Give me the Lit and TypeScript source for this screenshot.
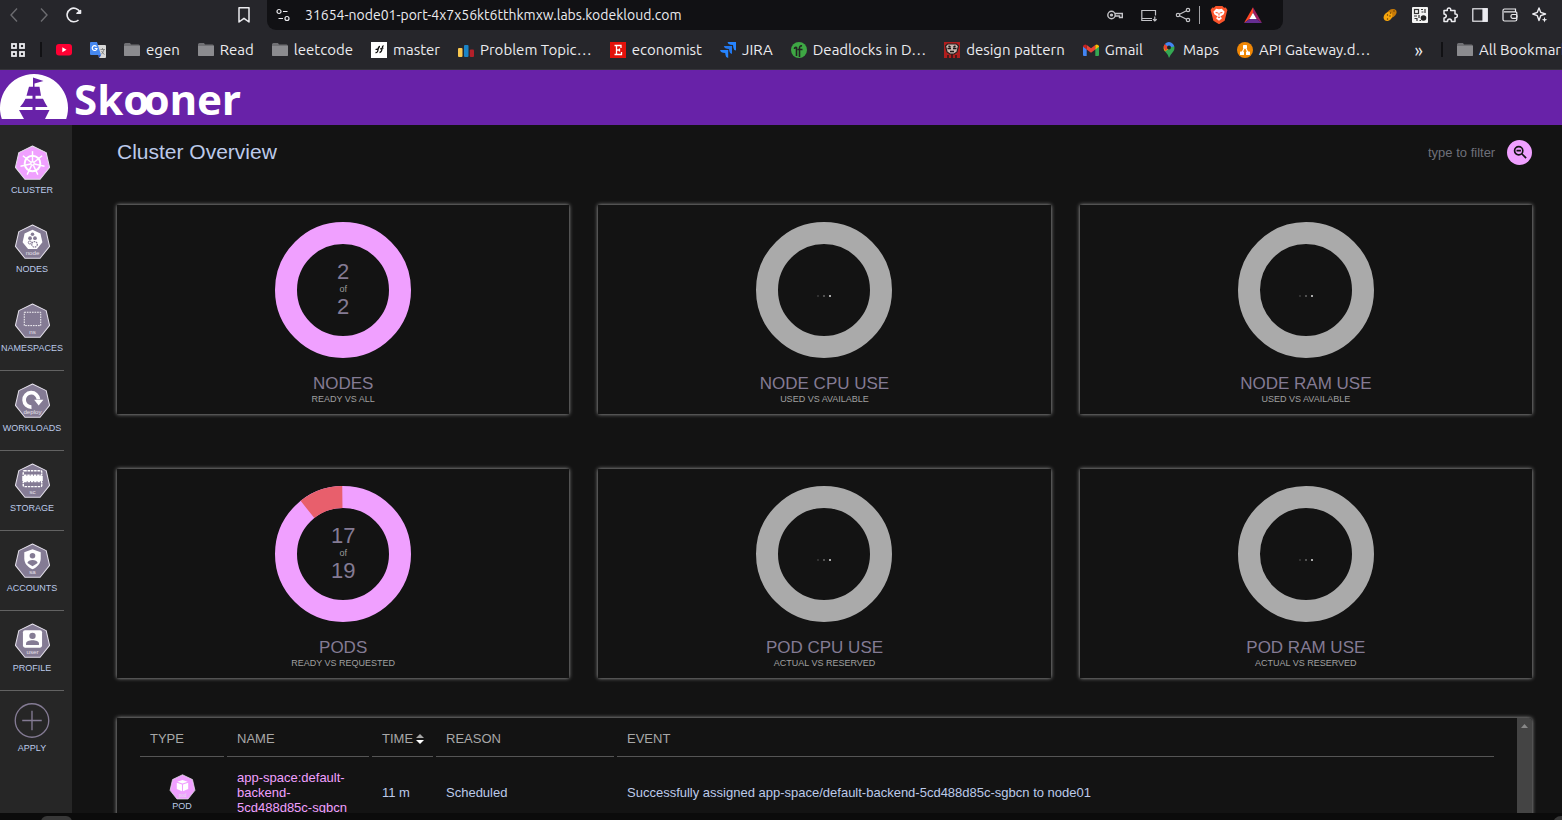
import { LitElement, html, svg, css, TemplateResult, SVGTemplateResult } from "lit";
import { customElement, property } from "lit/decorators.js";

const HEPTAGON = "0,-17 13.3,-10.6 16.6,3.8 7.4,15.3 -7.4,15.3 -16.6,3.8 -13.3,-10.6";

const glyphs: Record<string, SVGTemplateResult> = {
  cluster: svg`<g fill="none" stroke="#fff" stroke-width="1.9">
      <circle r="7.6"/>
      ${[0, 1, 2, 3, 4, 5, 6].map((i) => svg`<path stroke-width="1.4" d="M0 -2V-12" transform="rotate(${(i * 360) / 7})"/>`)}
    </g><circle r="2.4" fill="#fff"/><circle r="1" fill="#f0a0ff"/>`,
  node: svg`<polygon fill="#fff" transform="translate(0 -2.5) scale(.58)" points="${HEPTAGON}"/>
    <g fill="#847b94"><circle cx="0" cy="-8" r="1.7"/><circle cx="-2.4" cy="-4.2" r="1.8"/><circle cx="2.4" cy="-4.2" r="1.8"/></g>
    <g fill="none" stroke="#847b94"><circle cx="-2.6" cy="0" r="1.5" stroke-width=".9"/><circle cx="2" cy="1.8" r="2.7" stroke-width="1.2" stroke-dasharray="1.6 .7"/></g>`,
  ns: svg`<rect x="-8" y="-9" width="16" height="13" fill="none" stroke="#fff" stroke-width=".9" stroke-dasharray="1.6 .9"/>`,
  deploy: svg`<path fill="none" stroke="#fff" stroke-width="3.6" d="M-1 5.4A7 7 0 1 1 5.8 -2"/>
    <path fill="#fff" d="M1.6 -1.6H10.6L6 4Z"/>`,
  sc: svg`<g fill="none" stroke="#fff" stroke-width="1.4" stroke-dasharray="2.4 .8"><rect x="-9" y="-10.5" width="18" height="4.5" rx="1"/><rect x="-9" y="0" width="18" height="5" rx="1"/></g>
    <rect x="-10" y="-5.5" width="20" height="5" fill="#fff"/>`,
  sa: svg`<path fill="#fff" d="M0 -12L8 -9V-3C8 2 4.500 5.500 0 7.500C-4.500 5.500 -8 2 -8 -3V-9Z"/>
    <g fill="#847b94"><circle cy="-5.600" r="2.700"/><path d="M-5 1.500C-4.500 -2.500 4.500 -2.500 5 1.500L0 4.500Z"/></g>`,
  user: svg`<rect x="-9.300" y="-11" width="18.600" height="17" rx="2" fill="#fff"/>
    <g fill="#847b94"><circle cy="-5.500" r="3.100"/><path d="M-6.300 3.500V2C-6.300 -2.200 6.300 -2.200 6.300 2V3.500Z"/></g>`,
  pod: svg`<g fill="#fff"><path d="M0 -10L7 -7.800L0 -5.400L-7 -7.800Z"/><path d="M-7.600 -6.500L-.7 -4V5L-7.600 2Z"/><path d="M7.600 -6.500L.7 -4V5L7.600 2Z"/></g>`,
};

@customElement("kube-icon")
class KubeIcon extends LitElement {
  @property() kind = "node";
  @property() tag = "";
  @property({ type: Boolean }) active = false;

  static styles = css`
    :host { display: block; width: 37px; height: 37px; }
    svg { display: block; width: 100%; height: 100%; }
    text { font: 6px "Liberation Sans", Arial, sans-serif; fill: #e4e0ea; text-anchor: middle; }
  `;

  render() {
    return html`<svg viewBox="-18 -18 36 36" aria-hidden="true">
      <polygon points="${HEPTAGON}" fill="${this.active ? "#f0a0ff" : "#847b94"}" stroke="#e4e0ea" stroke-width="1" stroke-linejoin="round"/>
      ${glyphs[this.kind]}
      ${this.tag ? svg`<text y="12.500">${this.tag}</text>` : ""}
    </svg>`;
  }
}

@customElement("status-card")
class StatusCard extends LitElement {
  @property() heading = "";
  @property() detail = "";
  @property({ type: Number }) current = -1;
  @property({ type: Number }) total = -1;

  static styles = css`
    :host {
      display: flex; flex-direction: column; align-items: center;
      padding: 17px 0 10px; background: #131313; box-shadow: 0 0 4px #b0b0b0;
    }
    .chart { display: grid; place-items: center; }
    .chart > * { grid-area: 1 / 1; }
    svg { display: block; width: 136px; height: 136px; }
    .value { display: flex; flex-direction: column; align-items: center; padding-bottom: 2px; color: #847b94; font-size: 22px; line-height: 25px; }
    .of { font-size: 9px; line-height: 10px; color: #9a9a9a; }
    .dots { display: flex; gap: 4px; padding-top: 12px; }
    .dot { width: 2px; height: 2px; background: #303030; }
    .dot:nth-child(2) { background: #505050; }
    .dot:nth-child(3) { background: #aaa; }
    .heading { margin: 16px 0 0; font-size: 17px; line-height: 20px; font-weight: 400; color: #847b94; }
    .detail { font-size: 9px; line-height: 10px; color: #a0a0a0; }
  `;

  render() {
    const loaded = this.total >= 0;
    const length = 2 * Math.PI * 57;
    const missing = loaded ? 1 - this.current / this.total : 0;
    return html`
      <div class="chart">
        <svg viewBox="0 0 136 136" aria-hidden="true">
          <circle cx="68" cy="68" r="57" fill="none" stroke-width="22" stroke="${loaded ? "#f0a0ff" : "#aaaaaa"}"/>
          ${missing > 0
            ? svg`<circle cx="68" cy="68" r="57" fill="none" stroke-width="22" stroke="#e85f6c"
                stroke-dasharray="${missing * length} ${length}" transform="rotate(${-91 - missing * 357} 68 68)"/>`
            : ""}
        </svg>
        ${loaded
          ? html`<div class="value"><span>${this.current}</span><span class="of">of</span><span>${this.total}</span></div>`
          : html`<div class="dots"><i class="dot"></i><i class="dot"></i><i class="dot"></i></div>`}
      </div>
      <h2 class="heading">${this.heading}</h2>
      <div class="detail">${this.detail}</div>`;
  }
}

const icon = (body: SVGTemplateResult, size = 16): TemplateResult =>
  html`<svg class="icon" width="${size}" height="${size}" viewBox="0 0 16 16" fill="none" stroke="currentColor" stroke-width="1.2" aria-hidden="true">${body}</svg>`;

const folder = svg`<path d="M0 2.500Q0 1 1.500 1H6L7 2.500H14.500Q16 2.500 16 4V13Q16 14 15 14H1Q0 14 0 13Z" fill="#707074" stroke="none"/><path d="M0 4H16V13Q16 14 15 14H1Q0 14 0 13Z" fill="#8b8b8f" stroke="none"/>`;

const bookmarks: { label: string; title?: string; art: SVGTemplateResult }[] = [
  { label: "", title: "YouTube", art: svg`<rect y="2" width="16" height="11.500" rx="3" fill="#f03" stroke="none"/><path d="M6.300 5.200L10.500 7.700L6.300 10.200Z" fill="#fff" stroke="none"/>` },
  { label: "", title: "Translate", art: svg`<g stroke="none"><path d="M7 3H15Q16 3 16 4V15Q16 16 15 16H9Z" fill="#d8d8d8"/><path d="M1 0H7L11 13H1Q0 13 0 12V1Q0 0 1 0Z" fill="#4688f1"/><path d="M8 13H11L9.500 16Z" fill="#2a56c6"/></g><path d="M6.500 4.600A2.400 2.400 0 1 0 7 6.500H4.700" stroke="#fff"/><path d="M10.500 7.500H15M12.500 6V7.500M14 7.500Q13 11 11.300 12.300M11.500 9Q13 11.800 14.500 12.500" stroke="#777" stroke-width=".8"/>` },
  { label: "egen", art: folder },
  { label: "Read", art: folder },
  { label: "leetcode", art: folder },
  { label: "master", art: svg`<rect width="16" height="16" fill="#fff" stroke="none"/><path d="M4.500 10.500Q6.500 11 7 8Q7.300 4.500 9 4.500M8.500 10.500Q10.500 10.500 11 7Q11.300 4 12.500 3.500M4.500 7.500L8 6.500M9 7L12.500 6" stroke="#111" stroke-width="1.300"/>` },
  { label: "Problem Topic…", art: svg`<g stroke="none"><rect y="6" width="4.500" height="9" rx="1" fill="#f9c74f"/><rect x="6" y="3" width="4.500" height="12" rx="1" fill="#1a84c7"/><rect x="11.800" y="7.500" width="4.200" height="7.500" rx="1" fill="#b3202a"/></g>` },
  { label: "economist", art: svg`<rect width="16" height="16" fill="#e3120b" stroke="none"/><path d="M4.500 3.500H11V6M4.500 12.500H11.500V10M6.500 3.500V12.500M6.500 8H9.500M9.500 6.500V9.500" stroke="#fff" stroke-width="1.300"/>` },
  { label: "JIRA", art: svg`<g stroke="none" fill="#2684ff"><path d="M7.500 0H16V8.500Q13.500 8 13.300 5.500L13 3L10.500 2.700Q8 2.500 7.500 0Z"/><path d="M3.800 4H12V12Q9.500 11.500 9.300 9L9 7L7 6.700Q4.300 6.500 3.800 4Z" fill="#2277ee"/><path d="M0 8H8.200V16Q5.500 15.500 5.500 13L5.200 11L3 10.700Q.5 10.500 0 8Z"/></g>` },
  { label: "Deadlocks in D…", art: svg`<circle cx="8" cy="8" r="8" fill="#3ea744" stroke="none"/><path d="M3.500 7Q3.500 5 5.500 5.500V14M8.500 15V6Q8.500 3.500 11 4M6.500 7.500H11.500" stroke="#222" stroke-width="1.600"/>` },
  { label: "design pattern", art: svg`<rect width="16" height="16" fill="#b01e1e" stroke="none"/><path d="M1.500 4L3.500 2H12.500L14.500 4L13 10L10 12H6L3 10Z" fill="#c9b7b0" stroke="#26201f"/><path d="M3.500 6.500H7M9 6.500H12.500M6 9.500H10M4.500 4L6.500 5M11.500 4L9.500 5" stroke="#1c1717" stroke-width="1.500"/><path d="M4 13V16M12 13V16M8 12V16" stroke="#2b1717" stroke-width="1.500"/>` },
  { label: "Gmail", art: svg`<g stroke="none"><path d="M1 14Q0 14 0 13V4L3.700 6.800V14Z" fill="#4285f4"/><path d="M15 14Q16 14 16 13V4L12.300 6.800V14Z" fill="#34a853"/><path d="M3.700 2.900L8 6.200L12.300 2.900V7.600L8 10.800L3.700 7.600Z" fill="#ea4335"/><path d="M12.300 2.900Q14.500 1.500 16 4V4.800L12.300 7.600Z" fill="#fbbc04"/><path d="M3.700 2.900Q1.500 1.500 0 4V4.800L3.700 7.600Z" fill="#c5221f"/></g>` },
  { label: "Maps", art: svg`<g stroke="none"><path d="M8 16Q7.500 13 4.500 10Q2.500 8 2.700 5.500L13.200 4Q14.200 7.500 11.500 10.500Q8.800 13.500 8 16Z" fill="#34a853"/><path d="M4 9.500Q2 7 2.800 4L8 2.500L7.500 7Z" fill="#fbbc04"/><path d="M3.800 2L8 5.500L4.500 9Q1.500 5 3.800 2Z" fill="#ea4335"/><path d="M3.800 2Q8 -2 12 2Q13 3.200 13.200 4.500L8 5.500Z" fill="#4285f4"/><circle cx="8" cy="5.500" r="2" fill="#202124"/></g>` },
  { label: "API Gateway.d…", art: svg`<circle cx="8" cy="8" r="8" fill="#f08705" stroke="none"/><path d="M8 4.500L4.800 11M8 4.500L11.200 11" stroke="#fff"/><g fill="#fff" stroke="none"><rect x="6" y="3" width="4" height="3.500" rx=".6"/><rect x="3" y="9.500" width="4" height="3.500" rx=".6"/><rect x="9" y="9.500" width="4" height="3.500" rx=".6"/></g>` },
];

const siteIcon = svg`<circle cx="4" cy="4.500" r="2"/><path d="M8 4.500H12.500M3.500 11.500H8"/><circle cx="12" cy="11.500" r="2"/>`;

const addressTools: { title: string; art: SVGTemplateResult }[] = [
  { title: "Passwords", art: svg`<circle cx="4.500" cy="8" r="3.700" stroke-width="1.400"/><circle cx="4.500" cy="8" r="1" fill="currentColor"/><path d="M8 6.500H15.300V10.500H12.500V9H8" stroke-width="1.400"/>` },
  { title: "Install", art: svg`<path d="M11 13.500H.8V3.500H14.500V8.500M1 11.500H11M13.800 9.500V14M12 12.200L13.800 14L15.600 12.200"/>` },
  { title: "Share", art: svg`<circle cx="3" cy="8" r="1.700"/><circle cx="13" cy="3" r="1.700"/><circle cx="13" cy="13" r="1.700"/><path d="M4.500 7.200L11.500 3.800M4.500 8.800L11.500 12.200"/>` },
];

const extensions: { title: string; art: SVGTemplateResult }[] = [
  { title: "Cookies", art: svg`<g stroke="none"><ellipse cx="9.500" cy="6.500" rx="5.500" ry="4" transform="rotate(-35 9.500 6.500)" fill="#c67a08"/><ellipse cx="6" cy="9.500" rx="5" ry="4" transform="rotate(-50 6 9.500)" fill="#f5a40c"/><g fill="#5d3605"><circle cx="5.500" cy="8" r=".7"/><circle cx="8" cy="9" r=".7"/><circle cx="5.500" cy="12" r=".7"/><circle cx="8.500" cy="6" r=".7"/><circle cx="12" cy="4" r=".7"/></g></g>` },
  { title: "QR code", art: svg`<rect width="16" height="16" rx="1" fill="#f4f4f4" stroke="none"/><g stroke="#333"><rect x="2.500" y="2.500" width="4" height="4"/><path d="M9 2.500H11M13 2V6M9.500 5H11.500M2 9H5M7 8V11M2.500 11.500H5V14M7.500 13.500H9"/></g><circle cx="11.500" cy="11" r="2.800" fill="#222" stroke="none"/>` },
  { title: "Extensions", art: svg`<path stroke-width="1.500" d="M2 3.500H5.300Q5 1 7 1T8.700 3.500H13V7Q15.300 6.800 15.300 8.800T13 10.700V14.500H9.500Q9.500 12 7.500 12T5.500 14.500H2V11Q4.300 10.700 4.300 9T2 7Z" stroke-linejoin="round"/>` },
  { title: "Side panel", art: svg`<rect x=".8" y="1.800" width="14.400" height="12.400"/><rect x="11" y="1.800" width="4" height="12.400" fill="currentColor"/>` },
  { title: "Wallet", art: svg`<path d="M13.500 4.500V2H2.500Q1 2 1 3.500V12.500Q1 14 2.500 14H13Q14.800 14 14.800 12.500V6Q14.800 4.800 13.500 4.800H2"/><rect x="9" y="7.500" width="6" height="3.800" rx="1.500"/>` },
  { title: "Leo", art: svg`<path stroke-width="1.400" stroke-linejoin="round" d="M7 1L8.700 5.300L13.500 7L8.700 8.700L7 13.500L5.300 8.700L.8 7L5.300 5.300Z"/><path fill="currentColor" d="M12.500 9.800L13.200 12L15.300 12.700L13.200 13.400L12.500 15.500L11.800 13.400L9.800 12.700L11.800 12Z" stroke="none"/>` },
];

const menu = [
  { label: "CLUSTER", kind: "cluster", tag: "", active: true },
  { label: "NODES", kind: "node", tag: "node" },
  { label: "NAMESPACES", kind: "ns", tag: "ns", line: true },
  { label: "WORKLOADS", kind: "deploy", tag: "deploy", line: true },
  { label: "STORAGE", kind: "sc", tag: "sc", line: true },
  { label: "ACCOUNTS", kind: "sa", tag: "sa", line: true },
  { label: "PROFILE", kind: "user", tag: "user", line: true },
];

const cards = [
  { heading: "NODES", detail: "READY VS ALL", current: 2, total: 2 },
  { heading: "NODE CPU USE", detail: "USED VS AVAILABLE" },
  { heading: "NODE RAM USE", detail: "USED VS AVAILABLE" },
  { heading: "PODS", detail: "READY VS REQUESTED", current: 17, total: 19 },
  { heading: "POD CPU USE", detail: "ACTUAL VS RESERVED" },
  { heading: "POD RAM USE", detail: "ACTUAL VS RESERVED" },
];

@customElement("app-root")
class AppRoot extends LitElement {
  static styles = css`
    :host {
      display: flex; flex-direction: column; height: 100vh; overflow: hidden;
      background: #131313; color: #bccaea; font-family: "Liberation Sans", Arial, sans-serif; font-size: 13px;
    }
    * { box-sizing: border-box; }
    button, input { font: inherit; color: inherit; background: none; border: 0; padding: 0; margin: 0; outline: 0; }
    button { display: flex; align-items: center; justify-content: center; }
    a { color: inherit; text-decoration: none; }
    .icon { display: block; flex: none; }

    .browser { flex: none; background: #26262b; border-bottom: 1px solid #35353a; color: #ececf0; font-family: Ubuntu, "Noto Sans", sans-serif; }
    .toolbar { display: flex; align-items: center; height: 30px; padding: 0 14px 0 6px; }
    .nav { display: flex; gap: 14px; flex: none; }
    .dim { color: #6c6c70; }
    .save { margin-left: 154px; }
    .address { flex: 1; display: flex; align-items: center; height: 30px; margin: 0 99px 0 15px; padding: 0 21px 0 8px; background: #111114; border-radius: 0 0 9px 9px; }
    .url { flex: 1; min-width: 0; margin-left: 14px; font-size: 14px; }
    .tools { display: flex; align-items: center; gap: 18px; color: #c4c4c8; }
    .shields { display: flex; gap: 16px; margin-left: 8px; padding-left: 10px; border-left: 1px solid #a0a0a4; }
    .extensions { display: flex; gap: 14px; }
    .bookmarks { display: flex; align-items: center; height: 39px; padding-left: 10px; gap: 18px; font-size: 15px; white-space: nowrap; overflow: hidden; }
    .rule { flex: none; width: 2px; height: 15px; margin: 0 -4px; background: #111114; }
    .bookmark { display: flex; align-items: center; gap: 6px; flex: none; }
    .more { margin: 0 4px 0 auto; font-size: 18px; }
    .all { width: 105px; }

    .brand { flex: none; display: flex; align-items: center; gap: 5px; height: 55px; background: #6822a8; color: #fff; }
    .ship { display: block; width: 69px; height: 47px; }
    .name { font: 700 42px/48px "Noto Sans", "Open Sans", sans-serif; padding-top: 2px; }
    .linked { margin-left: -6px; }

    .body { flex: 1; min-height: 0; display: flex; }
    .side { flex: none; width: 72px; padding: 8px 8px 0 0; background: #262626; }
    .entry { display: flex; flex-direction: column; align-items: center; height: 79px; padding-top: 12px; font-size: 9px; line-height: 12px; gap: 2px; }
    .line { height: 80px; border-bottom: 1px solid #626262; }
    .plus { display: block; width: 37px; height: 37px; }

    main { flex: 1; min-width: 0; padding: 12px 30px 0 45px; overflow: hidden; }
    .top { display: flex; align-items: center; justify-content: space-between; height: 30px; }
    h1 { margin: 0; font-size: 21px; line-height: 30px; font-weight: 400; }
    .filter { display: flex; align-items: center; gap: 10px; }
    .query { width: 69px; font-size: 13px; }
    .query::placeholder { color: #6e7079; opacity: 1; }
    .clear { width: 25px; height: 25px; border-radius: 50%; background: #f0a0ff; color: #131313; }
    .cards { display: grid; grid-template-columns: repeat(3, 1fr); gap: 55px 29px; margin-top: 38px; }

    .events { display: flex; height: 400px; margin-top: 40px; box-shadow: 0 0 4px #b0b0b0; background: #131313; border-radius: 0 3px 0 0; }
    .list { flex: 1; padding: 0 20px; }
    table { width: 100%; table-layout: fixed; border-collapse: separate; border-spacing: 3px 0; line-height: 15px; }
    .c1 { width: 84px; } .c2 { width: 142px; } .c3 { width: 61px; } .c4 { width: 178px; }
    th { height: 39px; padding: 3px 0 0 10px; text-align: left; font-weight: 400; color: #a8a8a8; border-bottom: 1px solid #555; white-space: nowrap; }
    td { padding: 13px 10px 12px; vertical-align: middle; }
    .kind { text-align: center; font-size: 9px; line-height: 10px; }
    .kind kube-icon { width: 27px; height: 27px; margin: 0 auto; }
    .link { color: #f0a0ff; }
    .sort { display: inline-flex; align-items: center; gap: 3px; }
    .scroll { flex: none; width: 15px; padding-top: 6px; background: #444; color: #888; border-radius: 0 3px 0 0; }
    .scroll svg { display: block; margin: 0 auto; }
    .dock { flex: none; display: flex; justify-content: space-between; height: 7px; padding: 3px 0 0 41px; background: #0b0b0b; overflow: hidden; }
    .pill { width: 31px; height: 12px; border-radius: 8px; background: #383838; }
    .pill.end { width: 9px; border-radius: 8px 0 0 0; }
  `;

  render() {
    return html`
      <div class="browser">
        <div class="toolbar">
          <div class="nav">
            <button class="dim" aria-label="Back">${icon(svg`<path d="M11 1.500L5 8L11 14.500" stroke-width="1.400"/>`)}</button>
            <button class="dim" aria-label="Forward">${icon(svg`<path d="M5 1.500L11 8L5 14.500" stroke-width="1.400"/>`)}</button>
            <button aria-label="Reload">${icon(svg`<path d="M12.500 13A6.800 6.800 0 1 1 14 5" stroke-width="1.600"/><path d="M11 6.300H14.500V3.500Z" fill="currentColor" stroke-width="1.600" stroke-linejoin="round"/>`)}</button>
          </div>
          <button class="save" aria-label="Bookmark">${icon(svg`<path d="M3 .8H13V15L8 11.300L3 15Z" stroke-width="1.500" stroke-linejoin="round"/>`)}</button>
          <div class="address">
            ${icon(siteIcon)}
            <input class="url" aria-label="Address" .value=${"31654-node01-port-4x7x56kt6tthkmxw.labs.kodekloud.com"} />
            <div class="tools">${addressTools.map((t) => html`<button aria-label=${t.title}>${icon(t.art)}</button>`)}</div>
            <div class="shields">
              <button aria-label="Shields">${icon(svg`<path d="M5 0H11L12.500 1.500L14 1.300L15.500 3.500L15 5L13 13L8 16.200L3 13L1 5L.5 3.500L2 1.300L3.500 1.500Z" fill="#fb542b" stroke="none"/><path d="M8 2.800L10.500 2.500L13 5L12 7.500L9.500 9L10.500 11L8 13L5.500 11L6.500 9L4 7.500L3 5L5.500 2.500Z" fill="#fff" stroke="none"/><path d="M5 5.800L7 6.300M11 5.800L9 6.300M8 6V8.500M6.800 9.500L8 10.300L9.200 9.500" stroke="#fb542b" stroke-width=".9"/>`, 18)}</button>
              <button aria-label="Rewards">${icon(svg`<g stroke="none"><path d="M8 1L0 15L5 11.500L8 6Z" fill="#ff4724"/><path d="M8 1L16 15L11 11.500L8 6Z" fill="#9e1f63"/><path d="M0 15H16L11 11.500H5Z" fill="#662d91"/><path d="M8 6L11.200 11.500H4.800Z" fill="#fff"/></g>`, 18)}</button>
            </div>
          </div>
          <div class="extensions">${extensions.map((e) => html`<button aria-label=${e.title}>${icon(e.art)}</button>`)}</div>
        </div>
        <div class="bookmarks">
          <button aria-label="Apps">${icon(svg`<g stroke-width="1.800"><rect x="2" y="2" width="4" height="4"/><rect x="10" y="2" width="4" height="4"/><rect x="2" y="10" width="4" height="4"/><rect x="10" y="10" width="4" height="4"/></g>`)}</button>
          <i class="rule"></i>
          ${bookmarks.map((b) => html`<a class="bookmark" href="#" aria-label=${b.title ?? b.label}>${icon(b.art)}${b.label ? html`<span>${b.label}</span>` : ""}</a>`)}
          <button class="more" aria-label="More bookmarks">»</button>
          <i class="rule"></i>
          <a class="bookmark all" href="#">${icon(folder)}<span>All Bookmarks</span></a>
        </div>
      </div>

      <header class="brand">
        <svg class="ship" viewBox="0 0 69 47" aria-hidden="true">
          <path fill="#fff" d="M1.800 45A34 34 0 1 1 66.200 45Z" />
          <g fill="#6822a8"><path d="M33 3.500L43.500 7L34.500 9.500V13H33Z"/><path d="M29 12.800H39.500L41 21.700H26.500Z"/><path d="M25.500 24.700H43Q45 29 47.500 33H20Q23.500 29 25.500 24.700Z"/><path d="M19 36H49.500L45 45H24Z"/><path d="M32.500 21H35.500V37H32.500Z"/></g>
        </svg>
        <span class="name">Sko<span class="linked">o</span>ner</span>
      </header>

      <div class="body">
        <nav class="side">
          ${menu.map((m) => html`<a class="entry ${m.line ? "line" : ""}" href="#">
            <kube-icon .kind=${m.kind} .tag=${m.tag} .active=${!!m.active}></kube-icon><span>${m.label}</span></a>`)}
          <a class="entry" href="#">
            <svg class="plus" viewBox="0 0 36 36" fill="none" stroke="#847b94" stroke-width="1.300" aria-hidden="true"><circle cx="17.500" cy="17" r="16.300"/><path d="M17.500 7.500V26.500M8 17H27"/></svg>
            <span>APPLY</span>
          </a>
        </nav>

        <main>
          <div class="top">
            <h1>Cluster Overview</h1>
            <div class="filter">
              <input class="query" aria-label="Filter" placeholder="type to filter" />
              <button class="clear" aria-label="Clear filter">${icon(svg`<g stroke-width="1.900"><circle cx="6.500" cy="6.500" r="4.700"/><path d="M10 10L15 15M4 6.500H9"/></g>`, 14)}</button>
            </div>
          </div>
          <div class="cards">
            ${cards.map((c) => html`<status-card .heading=${c.heading} .detail=${c.detail} .current=${c.current ?? -1} .total=${c.total ?? -1}></status-card>`)}
          </div>
          <section class="events">
            <div class="list">
              <table>
                <colgroup><col class="c1" /><col class="c2" /><col class="c3" /><col class="c4" /><col /></colgroup>
                <thead>
                  <tr>
                    <th>TYPE</th><th>NAME</th>
                    <th><span class="sort">TIME<svg width="8" height="10" viewBox="0 0 8 10" aria-hidden="true"><path fill="#a8a8a8" d="M4 0L8 4H0Z"/><path fill="#fff" d="M0 6H8L4 10Z"/></svg></span></th>
                    <th>REASON</th><th>EVENT</th>
                  </tr>
                </thead>
                <tbody>
                  <tr>
                    <td class="kind"><kube-icon kind="pod" tag="pod" active></kube-icon>POD</td>
                    <td><a class="link" href="#">app-space:default-backend-5cd488d85c-sgbcn</a></td>
                    <td>11 m</td>
                    <td>Scheduled</td>
                    <td>Successfully assigned app-space/default-backend-5cd488d85c-sgbcn to node01</td>
                  </tr>
                </tbody>
              </table>
            </div>
            <div class="scroll"><svg width="7" height="4" viewBox="0 0 7 4" aria-hidden="true"><path fill="currentColor" d="M3.500 0L7 4H0Z"/></svg></div>
          </section>
        </main>
      </div>
      <footer class="dock"><i class="pill"></i><i class="pill end"></i></footer>`;
  }
}
